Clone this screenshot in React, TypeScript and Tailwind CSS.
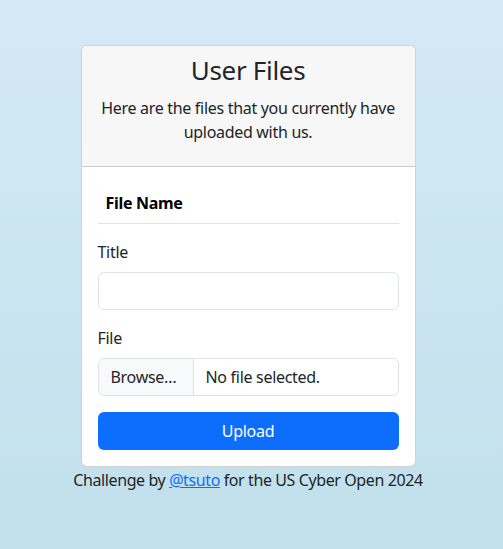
export default function App() {
    return (
        <div className="min-h-[549px] bg-gradient-to-b from-[#d4eaf6] to-[#c1e0eb] pt-[45px] text-[#212529] font-['Noto_Sans',sans-serif] tracking-[-0.3px]">
            <div className="ml-[73px] w-[350px]">
                {/* Card */}
                <div className="mx-auto w-[335px] bg-white border border-black/[0.175] rounded-[6px] overflow-hidden">
                    <div className="bg-[#f7f7f7] border-b border-black/[0.175] px-4 pt-2 pb-[6px] text-center">
                        <h3 className="text-[26px] leading-[33.6px] mb-2">User Files</h3>
                        <p className="text-base leading-6 mb-4">Here are the files that you currently have uploaded with us.</p>
                    </div>
                    <div className="p-4">
                        <table className="w-full mb-4">
                            <thead>
                                <tr className="border-b border-[#dee2e6]">
                                    <th className="text-left px-2 py-2 text-base leading-6 font-bold text-black">File Name</th>
                                </tr>
                            </thead>
                        </table>

                        <label className="block mb-2 text-base leading-6">Title</label>
                        <input type="text" className="block w-full h-[38px] mb-4 px-3 border border-[#dee2e6] rounded-[6px] outline-none" />

                        <label className="block mb-2 text-base leading-6">File</label>
                        <div className="flex h-[38px] mb-4 border border-[#dee2e6] rounded-[6px] overflow-hidden text-base">
                            <span className="flex items-center w-[95px] px-3 bg-[#f8f9fa] border-r border-[#dee2e6]">Browse…</span>
                            <span className="flex items-center px-3">No file selected.</span>
                        </div>

                        <button className="w-full h-[38px] bg-[#0d6efd] text-white text-base rounded-[6px]">Upload</button>
                    </div>
                </div>

                {/* Footer */}
                <p className="text-center text-base leading-6 mt-[1px] whitespace-nowrap tracking-[-0.4px]">
                    Challenge by <a href="#" className="text-[#0d6efd] underline">@tsuto</a> for the US Cyber Open 2024
                </p>
            </div>
        </div>
    );
}
